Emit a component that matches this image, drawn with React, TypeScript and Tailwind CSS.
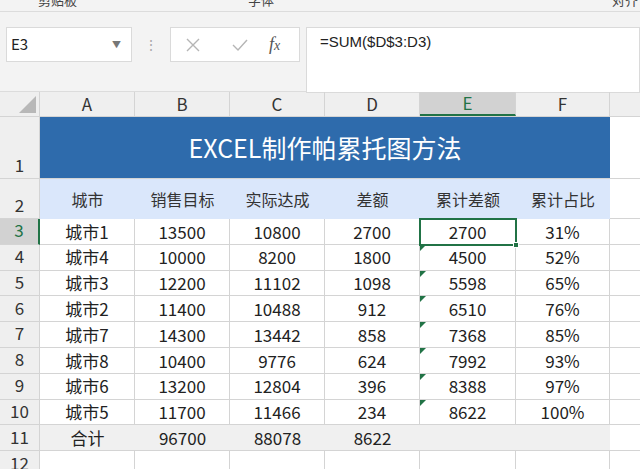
import React from "react";

const cols = ["A","B","C","D","E","F"];
const widths = [95,95,95,95,96,94];
const data = [
  ["城市1","13500","10800","2700","2700","31%"],
  ["城市4","10000","8200","1800","4500","52%"],
  ["城市3","12200","11102","1098","5598","65%"],
  ["城市2","11400","10488","912","6510","76%"],
  ["城市7","14300","13442","858","7368","85%"],
  ["城市8","10400","9776","624","7992","93%"],
  ["城市6","13200","12804","396","8388","97%"],
  ["城市5","11700","11466","234","8622","100%"],
];
const heads = ["城市","销售目标","实际达成","差额","累计差额","累计占比"];
const font = { fontFamily: '"Noto Sans CJK SC","Liberation Sans",sans-serif' };

function RowHead({ n, h, sel }: { n: number; h: number; sel?: boolean }) {
  return (
    <div className={`w-[40px] shrink-0 flex items-end justify-center pb-[1px] border-b border-r border-[#d4d4d4] text-[17px] text-[#333] ${sel ? "bg-[#d2d2d2] border-r-2 border-r-[#217346] text-[#217346]" : "bg-[#efefef]"}`} style={{ height: h }}>
      {n}
    </div>
  );
}

export default function App() {
  return (
    <div className="w-[640px] h-[469px] overflow-hidden bg-white text-[#222]" style={font}>
      <div className="h-[12px] bg-[#f3f3f3] border-b border-[#dcdcdc] relative text-[13px] text-[#444] leading-none whitespace-nowrap overflow-hidden">
        <span className="absolute left-[38px] top-[-7px]">剪贴板</span>
        <span className="absolute left-[248px] top-[-7px]">字体</span>
        <span className="absolute left-[612px] top-[-7px]">对齐</span>
      </div>
      <div className="h-[80px] bg-[#f3f3f3] flex items-start pt-[15px] border-b border-[#dcdcdc]">
        <div className="ml-[6px] w-[126px] h-[35px] bg-white border border-[#dadada] flex items-center justify-between px-[2px] text-[15px]">
          <span className="ml-[2px]">E3</span><span className="text-[9px] text-[#777] mr-[8px]">▼</span>
        </div>
        <div className="w-[38px] h-[35px] flex items-center justify-center text-[#aaa] text-[14px]">⋮</div>
        <div className="w-[130px] h-[35px] bg-white border border-[#dadada] flex items-center text-[#bbb]">
          <svg width="16" height="16" className="ml-[14px]" viewBox="0 0 16 16"><path d="M2 2L14 14M14 2L2 14" stroke="#b5b5b5" strokeWidth="1.4"/></svg>
          <svg width="18" height="16" className="ml-[30px]" viewBox="0 0 18 16"><path d="M2 8L7 13L16 3" stroke="#b5b5b5" strokeWidth="1.4" fill="none"/></svg>
          <span className="ml-[20px] text-[18px] italic text-[#555]" style={{ fontFamily: '"Liberation Serif",serif' }}>f<span className="text-[14px]">x</span></span>
        </div>
        <div className="ml-[6px] flex-1 h-[66px] bg-white border border-[#dadada] pl-[13px] pt-[3px] text-[15px]" style={{ fontFamily: '"Liberation Sans",sans-serif' }}>
          =SUM($D$3:D3)
        </div>
      </div>
      <div className="flex h-[25px] bg-[#efefef] border-b border-[#d4d4d4]">
        <div className="w-[40px] shrink-0 border-r border-[#d4d4d4] relative">
          <div className="absolute right-[3px] bottom-[3px] w-0 h-0 border-l-[17px] border-l-transparent border-b-[17px] border-b-[#b8b8b8]" />
        </div>
        {cols.map((c, i) => (
          <div key={c} className={`shrink-0 flex items-center justify-center border-r border-[#d4d4d4] text-[17px] ${c === "E" ? "bg-[#d2d2d2] border-b-2 border-b-[#217346] text-[#217346]" : "text-[#333]"}`} style={{ width: widths[i] }}>{c}</div>
        ))}
        <div className="flex-1" />
      </div>
      <div className="flex">
        <RowHead n={1} h={62} />
        <div className="w-[570px] h-[62px] bg-[#2e6bac] text-white text-[25px] flex items-center justify-center border-b border-[#d4d4d4]">EXCEL制作帕累托图方法</div>
        <div className="flex-1 border-b border-[#d4d4d4]" />
      </div>
      <div className="flex">
        <RowHead n={2} h={40} />
        {heads.map((h, i) => (
          <div key={i} className="shrink-0 h-[40px] bg-[#dae7fb] flex items-center justify-center text-[16px] text-[#333]" style={{ width: widths[i] }}>{h}</div>
        ))}
        <div className="flex-1 border-b border-[#d4d4d4]" />
      </div>
      {data.map((r, ri) => (
        <div key={ri} className="flex">
          <RowHead n={ri + 3} h={25.8} sel={ri === 0} />
          {r.map((v, i) => (
            <div key={i} className={`shrink-0 relative flex items-center justify-center border-b border-r border-[#d4d4d4] text-[17px] ${ri === 0 && i === 4 ? "outline-2 outline-[#217346] -outline-offset-1 z-10" : ""}`} style={{ width: widths[i], height: 25.8 }}>
              {i === 4 && ri > 0 && <div className="absolute left-0 top-0 w-0 h-0 border-t-[6px] border-t-[#217346] border-r-[6px] border-r-transparent" />}
              {ri === 0 && i === 4 && <div className="absolute right-[-4px] bottom-[-4px] w-[6px] h-[6px] bg-[#217346] border border-white" />}
              {v}
            </div>
          ))}
          <div className="flex-1 border-b border-[#d4d4d4]" style={{ height: 25.8 }} />
        </div>
      ))}
      <div className="flex">
        <RowHead n={11} h={26} />
        <div className="w-[570px] h-[26px] bg-[#f0f0f0] flex text-[17px] border-b border-[#d4d4d4]">
          {["合计","96700","88078","8622","",""].map((v, i) => (
            <div key={i} className="flex items-center justify-center" style={{ width: widths[i] }}>{v}</div>
          ))}
        </div>
        <div className="flex-1 border-b border-[#d4d4d4]" />
      </div>
      <div className="flex">
        <RowHead n={12} h={26} />
        {widths.map((w, i) => <div key={i} className="h-[26px] border-r border-[#d4d4d4]" style={{ width: w }} />)}
      </div>
    </div>
  );
}
